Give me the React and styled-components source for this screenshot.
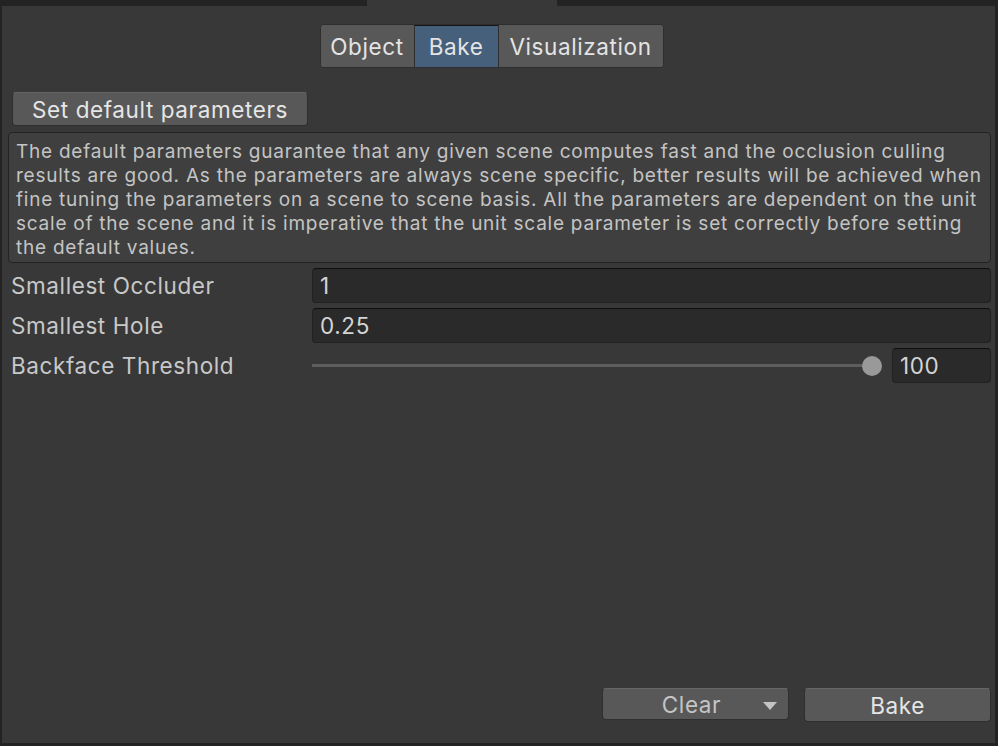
import React from 'react'
import styled, {createGlobalStyle, css} from 'styled-components'

const Global = createGlobalStyle`
  html, body { margin: 0; padding: 0; background: #232323; }
  body { font-family: Inter, "Noto Sans", sans-serif; }
`;

const box = css`
  box-sizing: border-box;
  border-radius: 4px;
`;

const S = {
  Window: styled.div`
  width: 998px;
  height: 746px;
  display: flex;
  flex-direction: column;
  background: #232323;
  overflow: hidden;
  `,

  TabStrip: styled.div`
  height: 6px;
  display: flex;
  margin-left: 2px;
  `,

  WinTab: styled.div`
  width: ${p => p.w}px;
  height: 6px;
  background: ${p => p.active ? '#383838' : 'transparent'};
  `,

  Panel: styled.div`
  flex: 1;
  margin: 0 3px 3px 2px;
  background: #383838;
  display: flex;
  flex-direction: column;
  padding: 18px 4px 21px 6px;
  box-sizing: border-box;
  letter-spacing: 0.6px;
  `,

  Toolbar: styled.div`
  align-self: center;
  display: flex;
  height: 44px;
  ${box};
  border: 1px solid #2e2e2e;
  background: #585858;
  overflow: hidden;
  margin-right: 16px;
  `,

  Segment: styled.div`
  display: flex;
  align-items: center;
  justify-content: center;
  width: ${p => p.w}px;
  font-size: 22.5px;
  color: #e4e4e4;
  background: ${p => p.on ? '#46607c' : '#585858'};
  border-left: ${p => p.first ? 'none' : '1px solid #2e2e2e'};
  border-top: ${p => p.on ? '1px solid #151515' : 'none'};
  box-sizing: border-box;
  `,

  ButtonRow: styled.div`
  margin-top: 24px;
  margin-left: 4px;
  display: flex;
  `,

  Button: styled.div`
  ${box};
  height: ${p => p.h || 34}px;
  width: ${p => p.w}px;
  background: #585858;
  border: 1px solid #2f2f2f;
  border-top-color: #656565;
  color: ${p => p.dim ? '#c4c4c4' : '#e6e6e6'};
  font-size: 22.5px;
  display: flex;
  align-items: center;
  justify-content: center;
  padding-right: ${p => p.dim ? 8 : 0}px;
  position: relative;
  `,

  HelpBox: styled.div`
  ${box};
  margin-top: 6px;
  height: 131px;
  background: #3f3f3f;
  border: 1px solid #232323;
  padding: 7px 8px 0 7px;
  color: #c4c4c4;
  font-size: 19px;
  line-height: 24px;
  letter-spacing: 0.76px;
  white-space: nowrap;
  `,

  Rows: styled.div`
  margin-top: 5px;
  display: flex;
  flex-direction: column;
  gap: 5px;
  `,

  Row: styled.div`
  display: flex;
  align-items: center;
  height: 35px;
  `,

  Label: styled.div`
  width: 304px;
  flex-shrink: 0;
  padding-left: 3px;
  box-sizing: border-box;
  font-size: 22.5px;
  color: #c8c8c8;
  `,

  Field: styled.div`
  ${box};
  flex: ${p => p.w ? `0 0 ${p.w}px` : 1};
  height: 35px;
  background: #2a2a2a;
  border: 1px solid #212121;
  border-top-color: #0f0f0f;
  color: #d4d4d4;
  font-size: 22.5px;
  display: flex;
  align-items: center;
  padding-left: 7px;
  `,

  Slider: styled.div`
  flex: 1;
  display: flex;
  align-items: center;
  height: 35px;
  margin-right: 10px;
  `,

  Track: styled.div`
  flex: 1;
  height: 3px;
  background: #5e5e5e;
  `,

  Thumb: styled.div`
  width: 20px;
  height: 20px;
  border-radius: 50%;
  background: #999999;
  margin-left: -10px;
  `,

  Footer: styled.div`
  margin-top: auto;
  display: flex;
  justify-content: flex-end;
  align-items: flex-start;
  gap: 15px;
  `,

  Arrow: styled.span`
  position: absolute;
  right: 11px;
  top: 13px;
  width: 0;
  height: 0;
  border-left: 7px solid transparent;
  border-right: 7px solid transparent;
  border-top: 8px solid #c4c4c4;
  `,
}

const helpLines = [
  'The default parameters guarantee that any given scene computes fast and the occlusion culling',
  'results are good. As the parameters are always scene specific, better results will be achieved when',
  'fine tuning the parameters on a scene to scene basis. All the parameters are dependent on the unit',
  'scale of the scene and it is imperative that the unit scale parameter is set correctly before setting',
  'the default values.',
]

function App() {
  return (
    <S.Window>
      <Global />
      <S.TabStrip>
        <S.WinTab w={180} />
        <S.WinTab w={185} />
        <S.WinTab w={190} active />
      </S.TabStrip>
      <S.Panel>
        <S.Toolbar>
          <S.Segment w={93} first>Object</S.Segment>
          <S.Segment w={84} on>Bake</S.Segment>
          <S.Segment w={165}>Visualization</S.Segment>
        </S.Toolbar>
        <S.ButtonRow>
          <S.Button w={296}>Set default parameters</S.Button>
        </S.ButtonRow>
        <S.HelpBox>
          {helpLines.map((l, i) => <div key={i}>{l}</div>)}
        </S.HelpBox>
        <S.Rows>
          <S.Row>
            <S.Label>Smallest Occluder</S.Label>
            <S.Field>1</S.Field>
          </S.Row>
          <S.Row>
            <S.Label>Smallest Hole</S.Label>
            <S.Field>0.25</S.Field>
          </S.Row>
          <S.Row>
            <S.Label>Backface Threshold</S.Label>
            <S.Slider>
              <S.Track />
              <S.Thumb />
            </S.Slider>
            <S.Field w={99}>100</S.Field>
          </S.Row>
        </S.Rows>
        <S.Footer>
          <S.Button w={187} h={32} dim>
            Clear
            <S.Arrow />
          </S.Button>
          <S.Button w={187}>Bake</S.Button>
        </S.Footer>
      </S.Panel>
    </S.Window>
  )
}

export default App
